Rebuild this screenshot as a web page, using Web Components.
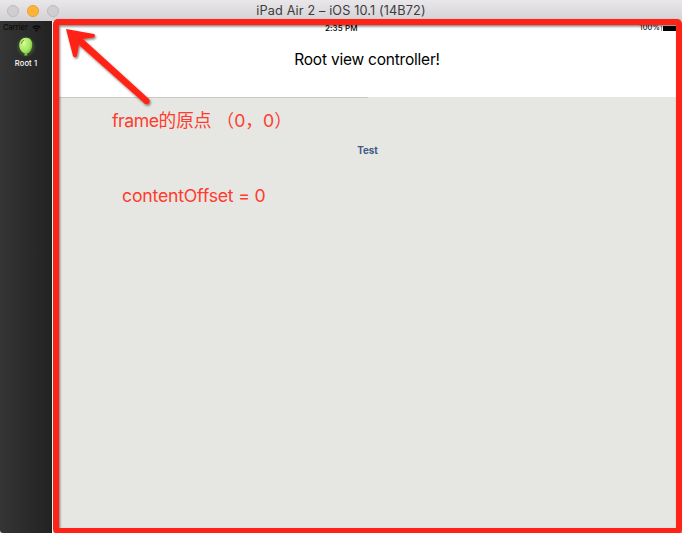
<!DOCTYPE html>
<html lang="zh-CN">
<head>
<meta charset="utf-8">
<title>iPad Air 2</title>
<style>
body{margin:0;width:682px;height:533px;overflow:hidden;font-family:Inter,"Noto Sans CJK SC",sans-serif}
</style>
</head>
<body>
<simulator-window>
  <title-bar slot="bar">iPad Air 2 – iOS 10.1 (14B72)</title-bar>
  <side-tabs slot="side"><tab-item>Root 1</tab-item></side-tabs>
  <root-view slot="main"><span slot="title">Root view controller!</span><span slot="button">Test</span></root-view>
  <annotation-layer slot="notes">
    <span slot="origin"><span style="letter-spacing:-.5px">frame</span>的原点 （0，0）</span>
    <span slot="offset">contentOffset = 0</span>
  </annotation-layer>
</simulator-window>
<script>
const define = (name, html) => customElements.define(name, class extends HTMLElement {
  constructor() {
    super();
    this.attachShadow({ mode: 'open' }).innerHTML = html;
  }
});

define('simulator-window', `
<style>
:host{display:grid;position:relative;width:682px;height:533px;grid-template:21px 1fr / 52px 1fr;background:#e6e7e2;overflow:hidden}
slot[name=bar]::slotted(*){grid-column:1 / -1}
</style>
<slot name="bar"></slot><slot name="side"></slot><slot name="main"></slot><slot name="notes"></slot>`);

define('title-bar', `
<style>
:host{display:grid;grid-template-columns:1fr auto 1fr;align-items:center;box-sizing:border-box;height:21px;padding:0 7px;background:linear-gradient(#e9e7e9,#d3d1d3);color:#3c3b3d;font-size:12.7px;line-height:20px;letter-spacing:.13px;white-space:nowrap}
.lights{display:flex;gap:8px}
i{box-sizing:border-box;width:12px;height:12px;border-radius:50%;background:#d0ced0;border:1px solid #bcbabc}
i.min{background:#fdb437;border-color:#e9a02c}
</style>
<div class="lights"><i></i><i class="min"></i><i></i></div><slot></slot><div></div>`);

define('side-tabs', `
<style>
:host{display:flex;flex-direction:column;background:linear-gradient(90deg,#353535,#222);box-shadow:inset -1px 0 #17212a;border-bottom-left-radius:3px}
.status{display:flex;align-items:center;height:14px;padding-left:3px;gap:4px;color:#050505;font-size:7.6px;line-height:14px}
svg{display:block}
</style>
<div class="status"><span>Carrier</span><svg width="9" height="7" viewBox="0 0 9 7"><g fill="none" stroke="#050505" stroke-width="1.1"><path d="M.6 2.5Q4.5-.8 8.4 2.5M2.2 4.2Q4.5 2.2 6.8 4.2"/></g><path d="M3.2 5.3Q4.5 4.3 5.8 5.3L4.5 6.8Z" fill="#050505"/></svg></div>
<slot></slot>`);

define('tab-item', `
<style>
:host{display:flex;flex-direction:column;align-items:center;color:#fff;font-size:7.6px;line-height:10px;font-weight:500;letter-spacing:.1px}
svg{display:block;margin-top:1px}
.label{margin-top:1px}
</style>
<svg width="22" height="22" viewBox="0 0 22 22">
<defs><radialGradient id="b" cx=".36" cy=".3" r=".75"><stop offset="0" stop-color="#d4f78a"/><stop offset=".6" stop-color="#a4e864"/><stop offset="1" stop-color="#66b837"/></radialGradient><radialGradient id="g"><stop offset=".55" stop-color="#548c33" stop-opacity=".5"/><stop offset="1" stop-color="#548c33" stop-opacity="0"/></radialGradient></defs>
<ellipse cx="11" cy="10.5" rx="10" ry="11" fill="url(#g)"/>
<path d="M10.6 1.8C15 1.4 17.8 5 17.2 9.8C16.7 14.2 14.2 17.5 11.8 17.6L12.6 19.6H9L10 17.5C6.8 16.6 4 12.8 4.3 8.8C4.5 4.8 7 2 10.6 1.8Z" fill="url(#b)"/>
<path d="M6.4 7.6Q6.8 5.2 8.8 4.2" fill="none" stroke="#3a6f20" stroke-width=".9"/>
<ellipse cx="9" cy="7" rx="1.3" ry="2" fill="#e6ffb0" opacity=".6" transform="rotate(30 9 7)"/>
</svg>
<span class="label"><slot></slot></span>`);

define('root-view', `
<style>
:host{display:flex;flex-direction:column;background:#e6e7e2;border-left:1px solid #fff;color:#000;min-width:0}
header{display:flex;flex-direction:column;height:76px;background:#fff}
.status{display:grid;grid-template-columns:272px auto 1fr;align-items:center;height:14px;padding-right:6px;font-size:7.6px;line-height:14px}
.time{font-weight:500;font-size:8px;letter-spacing:.12px}
.power{display:flex;justify-content:flex-end;align-items:center;gap:1px;letter-spacing:.1px}
.nub{width:1px;height:5px;background:#999}
.cell{width:13px;height:5px;background:#000}
.title{align-self:center;margin-top:15px;font-size:15.5px;line-height:20px;letter-spacing:-.22px;padding-right:1px;white-space:nowrap}
.rule{height:1px;width:315px;background:#c9c9c7}
.button{align-self:center;margin-top:47px;color:#435982;font-size:9.8px;font-weight:700;line-height:12px}
</style>
<header><div class="status"><span></span><span class="time">2:35 PM</span><div class="power"><span>100%</span><div class="nub"></div><div class="cell"></div></div></div>
<div class="title"><slot name="title"></slot></div></header>
<div class="rule"></div>
<div class="button"><slot name="button"></slot></div>`);

define('annotation-layer', `
<style>
:host{display:block;position:absolute;inset:0;color:#ff3b2f;font-size:17.7px;line-height:24px;letter-spacing:-.22px;white-space:nowrap}
svg{position:absolute;inset:0}
.origin{position:absolute;left:112px;top:109px;letter-spacing:0}
.offset{position:absolute;left:122px;top:184px}
</style>
<svg width="682" height="533" viewBox="0 0 682 533">
<defs><filter id="s" x="-10%" y="-10%" width="120%" height="120%"><feDropShadow dx="1" dy="1.5" stdDeviation="1.2" flood-color="#000" flood-opacity=".5"/></filter></defs>
<g filter="url(#s)"><rect x="56" y="22" width="623" height="509" rx="2" fill="none" stroke="#ff2412" stroke-width="6"/></g>
<path filter="url(#s)" d="M66 29L94 34Q96 35.5 94 37.5L83 39L149 99Q151 102 148 104Q145 105 143 102L79 45L77 56Q75 58.5 73 56Z" fill="#ff2412"/>
</svg>
<div class="origin"><slot name="origin"></slot></div>
<div class="offset"><slot name="offset"></slot></div>`);
</script>
</body>
</html>
